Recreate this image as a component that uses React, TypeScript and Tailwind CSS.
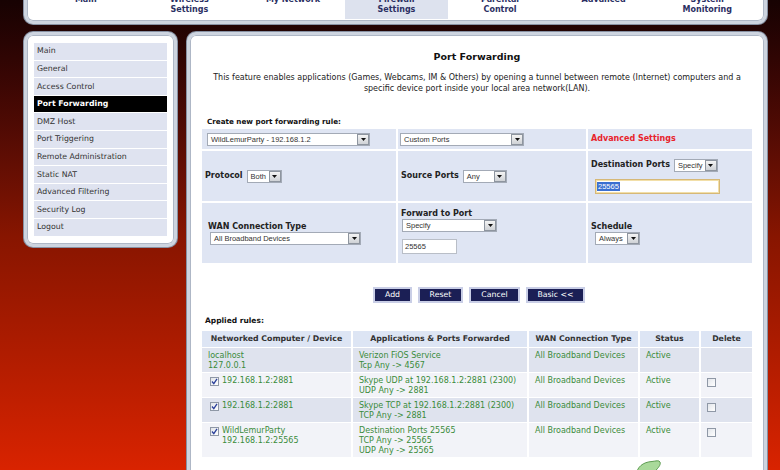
import React from 'react';

const navItems: string[][] = [
  ['Main'],
  ['Wireless', 'Settings'],
  ['My Network'],
  ['Firewall', 'Settings'],
  ['Parental', 'Control'],
  ['Advanced'],
  ['System', 'Monitoring'],
];

const menu = [
  'Main',
  'General',
  'Access Control',
  'Port Forwarding',
  'DMZ Host',
  'Port Triggering',
  'Remote Administration',
  'Static NAT',
  'Advanced Filtering',
  'Security Log',
  'Logout',
];

const rules = [
  {
    check: false,
    device: ['localhost', '127.0.0.1'],
    app: ['Verizon FiOS Service', 'Tcp Any -> 4567'],
    del: false,
    h: 'h-[24px]',
    bg: 'bg-[#dfe3ee]',
  },
  {
    check: true,
    device: ['192.168.1.2:2881'],
    app: ['Skype UDP at 192.168.1.2:2881 (2300)', 'UDP Any -> 2881'],
    del: true,
    h: 'h-[24px]',
    bg: 'bg-[#f2f3f8]',
  },
  {
    check: true,
    device: ['192.168.1.2:2881'],
    app: ['Skype TCP at 192.168.1.2:2881 (2300)', 'TCP Any -> 2881'],
    del: true,
    h: 'h-[24px]',
    bg: 'bg-[#dfe3ee]',
  },
  {
    check: true,
    device: ['WildLemurParty', '192.168.1.2:25565'],
    app: ['Destination Ports 25565', 'TCP Any -> 25565', 'UDP Any -> 25565'],
    del: true,
    h: 'h-[34px]',
    bg: 'bg-[#f2f3f8]',
  },
];

function Select({ value, className }: { value: string; className: string }) {
  return (
    <div className={`flex h-[13px] items-stretch border border-[#a3aab6] bg-white ${className}`}>
      <span className="flex-1 truncate pl-[3px] font-['Liberation_Sans',sans-serif] text-[7.5px] leading-[11px] text-[#333]">
        {value}
      </span>
      <span className="flex w-[12px] items-center justify-center border border-[#8e959f] bg-linear-to-b from-[#f4f4f4] to-[#cfd2d6]">
        <svg width="5" height="3" viewBox="0 0 5 3">
          <polygon points="0,0 5,0 2.5,3" fill="#111" />
        </svg>
      </span>
    </div>
  );
}

function CheckBox({ checked }: { checked: boolean }) {
  return (
    <span className="flex h-[9px] w-[9px] shrink-0 items-center justify-center border border-[#8f98a6] bg-linear-to-br from-[#e2e5ea] to-white">
      {checked && (
        <svg width="7" height="7" viewBox="0 0 7 7">
          <path d="M1 3.5 L2.8 5.6 L6 0.8" stroke="#2a3f9a" strokeWidth="1.3" fill="none" />
        </svg>
      )}
    </span>
  );
}

function Panel({ className, children }: { className: string; children: React.ReactNode }) {
  return (
    <div
      className={`rounded-[9px] border-[3px] border-[#cdd4df] bg-white shadow-[0_0_0_1px_#8791a3,inset_0_0_0_1px_#aeb7c6] ${className}`}
    >
      {children}
    </div>
  );
}

export default function App() {
  return (
    <div className="relative h-[470px] w-full overflow-hidden bg-linear-to-b from-[#170202] via-[#871500] to-[#d92300] font-['DejaVu_Sans',sans-serif]">
      <div className="ml-[24px] w-[743px]">
        <Panel className="-mt-[12px] pb-[2px] pl-[7px] pr-[5px]">
          <div className="grid grid-cols-7">
            {navItems.map((item) => {
              const active = item[0] === 'Firewall';
              return (
                <div
                  key={item[0]}
                  className={`pb-[4px] pt-[4px] text-center text-[8px] font-bold leading-[10px] text-[#2b2f63] ${
                    active ? 'bg-[#dde2ee]' : ''
                  }`}
                >
                  {item.map((l) => (
                    <div key={l}>{l}</div>
                  ))}
                </div>
              );
            })}
          </div>
        </Panel>

        <div className="mt-[8px] flex items-start gap-[10px]">
          <Panel className="w-[153px] px-[7px] pb-[8px] pt-[8px]">
            <div className="flex flex-col gap-[1px]">
              {menu.map((m) => {
                const active = m === 'Port Forwarding';
                return (
                  <div
                    key={m}
                    className={`flex h-[16.6px] items-center pl-[3px] text-[7.8px] ${
                      active ? 'bg-black font-bold text-white' : 'bg-[#dfe3f0] text-[#333]'
                    }`}
                  >
                    {m}
                  </div>
                );
              })}
            </div>
          </Panel>

          <Panel className="relative h-[460px] w-[580px] px-[12px]">
            <h1 className="mt-[15px] text-center text-[9.5px] font-bold leading-[14px] text-[#111]">Port Forwarding</h1>
            <p className="mt-[8px] text-center text-[8px] leading-[11px] text-[#222]">
              This feature enables applications (Games, Webcams, IM &amp; Others) by opening a tunnel between remote (Internet) computers and a
              <br />
              specific device port inside your local area network(LAN).
            </p>

            <div className="mt-[22px] pl-[5px] text-[7.2px] font-bold leading-[11px] text-[#111]">Create new port forwarding rule:</div>

            <div className="mt-[2px] grid grid-cols-[194px_188px_164px] grid-rows-[20px_50px_60px] gap-[2px] text-[8px] text-[#222]">
              <div className="flex items-center bg-[#dfe5f3] pl-[5px]">
                <Select value="WildLemurParty - 192.168.1.2" className="w-[163px]" />
              </div>
              <div className="flex items-center bg-[#dfe5f3] pl-[2px]">
                <Select value="Custom Ports" className="w-[124px]" />
              </div>
              <div className="flex items-center bg-[#dfe5f3] pl-[3px] font-bold text-[#e8232b]">Advanced Settings</div>

              <div className="flex items-center gap-[4px] bg-[#dfe5f3] pl-[3px]">
                <span className="font-bold">Protocol</span>
                <Select value="Both" className="w-[35px]" />
              </div>
              <div className="flex items-center gap-[4px] bg-[#dfe5f3] pl-[3px]">
                <span className="font-bold">Source Ports</span>
                <Select value="Any" className="w-[44px]" />
              </div>
              <div className="flex flex-col justify-center gap-[7px] bg-[#dfe5f3] pl-[3px]">
                <div className="flex items-center gap-[4px]">
                  <span className="font-bold">Destination Ports</span>
                  <Select value="Specify" className="w-[44px]" />
                </div>
                <div className="ml-[4px] flex h-[15px] w-[125px] items-center border border-[#d6b877] bg-white pl-[1px] shadow-[inset_0_0_0_1px_#f2dfa8]">
                  <span className="bg-[#3a6fd0] px-[1px] font-['Liberation_Sans',sans-serif] text-[7.5px] leading-[9px] text-white">
                    25565
                  </span>
                </div>
              </div>

              <div className="flex flex-col justify-center bg-[#dfe5f3] pl-[6px]">
                <span className="font-bold leading-[11px]">WAN Connection Type</span>
                <Select value="All Broadband Devices" className="ml-[2px] w-[151px]" />
              </div>
              <div className="flex flex-col bg-[#dfe5f3] pl-[3px] pt-[5px]">
                <span className="font-bold leading-[11px]">Forward to Port</span>
                <Select value="Specify" className="ml-[1px] w-[95px]" />
                <div className="ml-[1px] mt-[7px] flex h-[15px] w-[55px] items-center border border-[#b9bec7] bg-white pl-[2px] font-['Liberation_Sans',sans-serif] text-[7.5px] text-[#333]">
                  25565
                </div>
              </div>
              <div className="flex flex-col justify-center bg-[#dfe5f3] pl-[3px]">
                <span className="font-bold leading-[11px]">Schedule</span>
                <Select value="Always" className="ml-[4px] w-[45px]" />
              </div>
            </div>

            <div className="mt-[24px] flex justify-center gap-[6px] pl-[4px]">
              {[
                ['Add', 'w-[39px]'],
                ['Reset', 'w-[45px]'],
                ['Cancel', 'w-[51px]'],
                ['Basic <<', 'w-[59px]'],
              ].map(([label, w]) => (
                <div
                  key={label}
                  className={`flex h-[16px] items-center justify-center border-2 border-[#c9cee6] bg-[#1b1f55] text-[7.8px] text-white ${w}`}
                >
                  {label}
                </div>
              ))}
            </div>

            <div className="mt-[12px] pl-[3px] text-[7.5px] font-bold leading-[11px] text-[#111]">Applied rules:</div>

            <div className="mt-[5px] w-[548px] text-[8px] leading-[10px]">
              <div className="grid h-[16px] grid-cols-[149px_174px_109px_59px_51px] gap-[2px] font-bold text-[#333]">
                {['Networked Computer / Device', 'Applications & Ports Forwarded', 'WAN Connection Type', 'Status', 'Delete'].map(
                  (h) => (
                    <div key={h} className="flex items-center justify-center bg-[#dde5f4] text-[7.8px]">
                      {h}
                    </div>
                  )
                )}
              </div>
              {rules.map((r, i) => (
                <div
                  key={i}
                  className={`mt-[1px] grid grid-cols-[149px_174px_109px_59px_51px] gap-[2px] text-[#3a8b3a] ${r.h}`}
                >
                  <div className={`flex items-start gap-[3px] pl-[6px] pt-[3px] ${r.bg}`}>
                    {r.check && (
                      <span className="ml-[2px] mt-[1px]">
                        <CheckBox checked />
                      </span>
                    )}
                    <div>
                      {r.device.map((d) => (
                        <div key={d}>{d}</div>
                      ))}
                    </div>
                  </div>
                  <div className={`pl-[6px] pt-[3px] ${r.bg}`}>
                    {r.app.map((a) => (
                      <div key={a}>{a}</div>
                    ))}
                  </div>
                  <div className={`pl-[6px] pt-[3px] ${r.bg}`}>All Broadband Devices</div>
                  <div className={`pl-[6px] pt-[3px] ${r.bg}`}>Active</div>
                  <div className={`pl-[6px] pt-[5px] ${r.bg}`}>{r.del && <CheckBox checked={false} />}</div>
                </div>
              ))}
            </div>

            <svg className="absolute left-[445px] top-[424px]" width="28" height="16" viewBox="0 0 28 16">
              <path
                d="M1 16 C2 8 8 3 17 2.5 C21 2 24 1 25 3 C26 5 24 8 22 10 C20 12 20 14 20 16 Z"
                fill="#a9d99a"
                stroke="#5e9c52"
                strokeWidth="1"
              />
            </svg>
          </Panel>
        </div>
      </div>
    </div>
  );
}
